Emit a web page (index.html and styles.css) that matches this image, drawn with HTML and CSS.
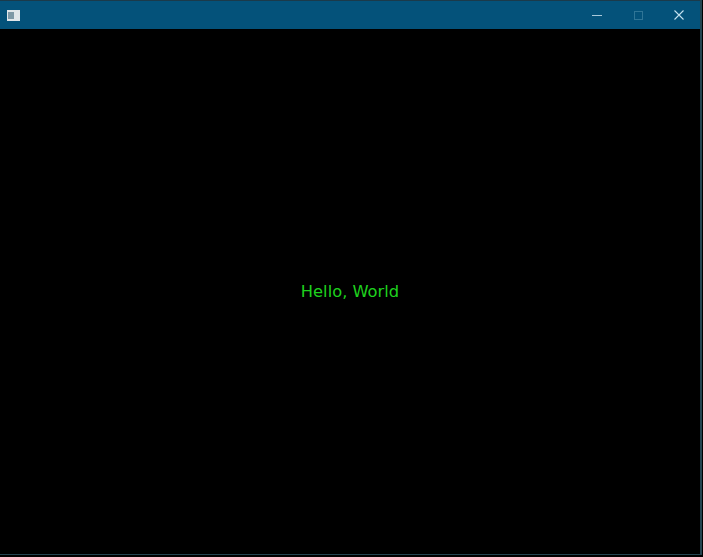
FILE: index.html
```html
<!DOCTYPE html>
<html lang="en">
<head>
    <meta charset="UTF-8">
    <title>Hello, World</title>
    <link rel="stylesheet" href="styles.css">
</head>
<body>
    <div class="window">
        <div class="titlebar">
            <svg class="app-icon" width="13" height="11" viewBox="0 0 13 11">
                <rect width="13" height="11" fill="#dfe6ea"/>
                <rect x="1" y="2" width="6" height="7" fill="#7c98a6"/>
            </svg>
            <div class="controls">
                <svg class="btn" width="12" height="12" viewBox="0 0 12 12">
                    <path d="M1 6.5h10" stroke="#a9c9da" stroke-width="1"/>
                </svg>
                <svg class="btn" width="12" height="12" viewBox="0 0 12 12">
                    <rect x="2.5" y="2.5" width="8" height="8" fill="none" stroke="#2f7596" stroke-width="1"/>
                </svg>
                <svg class="btn" width="12" height="12" viewBox="0 0 12 12">
                    <path d="M1.5 1.5l9 9M10.5 1.5l-9 9" stroke="#c4e2ef" stroke-width="1.1"/>
                </svg>
            </div>
        </div>
        <div class="content">
            <span class="hello">Hello, World</span>
        </div>
    </div>
</body>
</html>
```

FILE: styles.css
```css
/* reset css */
html,body {
    margin: 0;
    padding: 0;
    height: 100%;
    background-color: #000;
}
/* real css */
.window {
    box-sizing: border-box;
    display: flex;
    flex-direction: column;
    margin-right: 1px;
    height: 555px;
    border-right: 2px solid #24444f;
    border-bottom: 1px solid #24444f;
}
.titlebar {
    display: flex;
    align-items: center;
    justify-content: space-between;
    padding: 0 15px 0 7px;
    height: 29px;
    border-top: 1px solid #1b3a4a;
    box-sizing: border-box;
    background-color: #04527a;
}
.controls {
    display: flex;
    gap: 29px;
}
.content {
    flex: 1;
    display: flex;
    align-items: center;
    justify-content: center;
    background-color: #000;
}
.hello {
    font-family: "DejaVu Sans", sans-serif;
    font-size: 16.3px;
    color: #1ed01e;
}
```
